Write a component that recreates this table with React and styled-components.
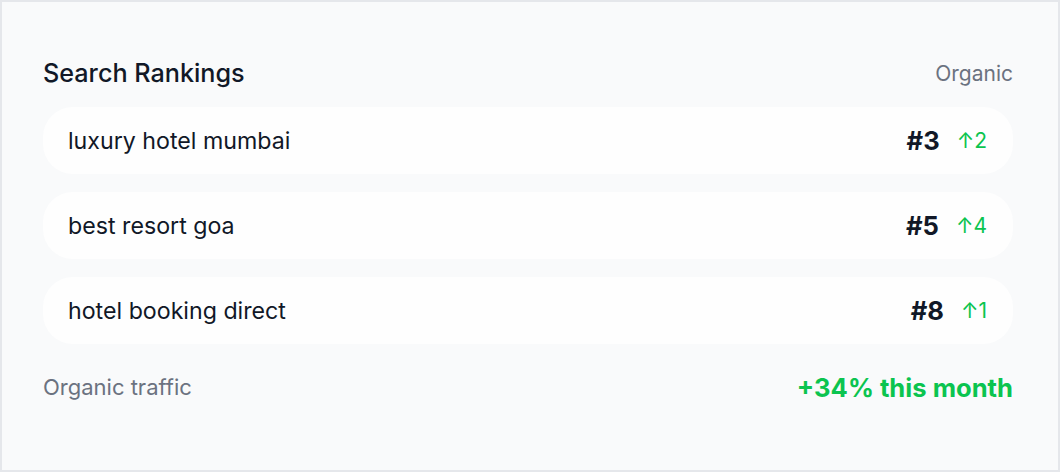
import React from "react";
import styled, { createGlobalStyle } from "styled-components";

const GlobalStyle = createGlobalStyle`
  * { box-sizing: border-box; }
  body {
    margin: 0;
    font-family: Inter, "Noto Sans", sans-serif;
    background: #ffffff;
  }
`;

const rankings = [
  { keyword: "luxury hotel mumbai", rank: 3, change: 2 },
  { keyword: "best resort goa", rank: 5, change: 4 },
  { keyword: "hotel booking direct", rank: 8, change: 1 },
];

const App = () => (
  <>
    <GlobalStyle />
    <Card>
      <Header>
        <Title>Search Rankings</Title>
        <Tag>Organic</Tag>
      </Header>
      <List>
        {rankings.map((r) => (
          <Row key={r.keyword}>
            <Keyword>{r.keyword}</Keyword>
            <Stats>
              <Rank>#{r.rank}</Rank>
              <Change>↑{r.change}</Change>
            </Stats>
          </Row>
        ))}
      </List>
      <Footer>
        <FooterLabel>Organic traffic</FooterLabel>
        <FooterValue>+34% this month</FooterValue>
      </Footer>
    </Card>
  </>
);

export default App;

const Card = styled.section`
  display: flex;
  flex-direction: column;
  width: 1060px;
  height: 472px;
  background-color: #f9fafb;
  border: 2px solid #e5e7eb;
  padding: 57px 45px 0 41px;
`;

const Header = styled.div`
  display: flex;
  align-items: center;
  justify-content: space-between;
  height: 28px;
`;

const Title = styled.h3`
  margin: 0;
  font-size: 25.2px;
  font-weight: 500;
  color: #111827;
`;

const Tag = styled.span`
  font-size: 21px;
  color: #6b7280;
`;

const List = styled.div`
  display: flex;
  flex-direction: column;
  gap: 18px;
  margin-top: 20px;
`;

const Row = styled.div`
  display: flex;
  align-items: center;
  justify-content: space-between;
  height: 67px;
  padding: 0 26px 0 25px;
  background-color: #fefefe;
  border-radius: 30px;
`;

const Keyword = styled.span`
  font-size: 23.2px;
  color: #111827;
`;

const Stats = styled.div`
  display: flex;
  align-items: center;
  gap: 17px;
`;

const Rank = styled.span`
  font-size: 25.6px;
  font-weight: 700;
  color: #111827;
`;

const Change = styled.span`
  font-size: 21px;
  color: #0bc44f;
`;

const Footer = styled.div`
  display: flex;
  align-items: center;
  justify-content: space-between;
  height: 30px;
  margin-top: 28px;
`;

const FooterLabel = styled.span`
  font-size: 22px;
  color: #6b7280;
`;

const FooterValue = styled.span`
  font-size: 25.6px;
  font-weight: 700;
  color: #0bc44f;
`;
